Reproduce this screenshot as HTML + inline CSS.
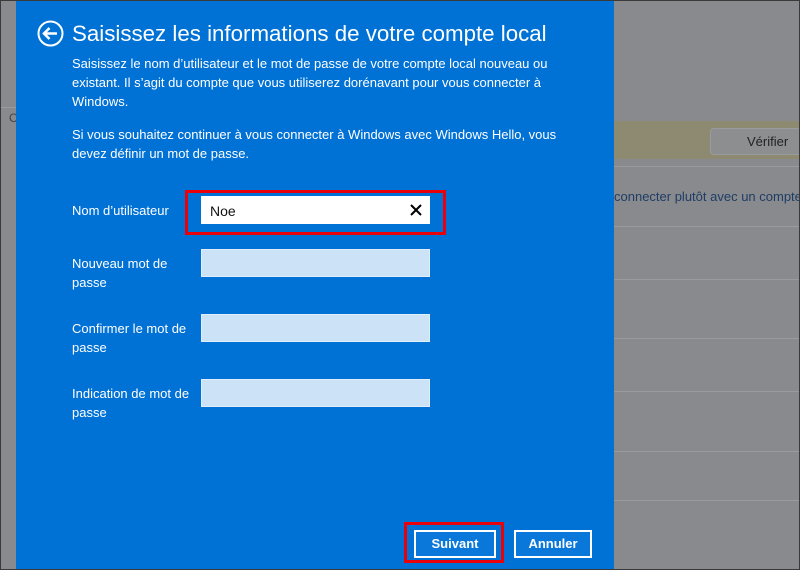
<!DOCTYPE html>
<html><head><meta charset="utf-8"><style>
*{margin:0;padding:0;box-sizing:border-box}
body{width:800px;height:570px;overflow:hidden;position:relative;background:#888a8d;font-family:"Liberation Sans",sans-serif;}
.frame{position:absolute;inset:0;border:1px solid #3a3a3a;z-index:20;pointer-events:none}
.abs{position:absolute}
.line{position:absolute;height:1px;background:#9a9b9d}
.blue{position:absolute;left:16px;top:0;width:598px;height:570px;background:#0071d5;color:#fff}
.t{position:absolute;color:#fff;font-size:13px;line-height:19px}
.in{position:absolute;left:185px;width:229px;height:28px;background:#cce2f6;border:1px solid #e0eefb}
.btn{position:absolute;top:530px;height:28px;border:2px solid #fff;color:#fff;font-weight:bold;font-size:13px;text-align:center;line-height:24px;background:#0a78da}
.red{position:absolute;border:3px solid #e8000b}
</style></head><body>
<div class="line" style="left:0;top:107px;width:16px"></div>
<div class="abs" style="left:9px;top:111px;font-size:12px;color:#444">C</div>
<div class="abs" style="left:614px;top:121px;width:186px;height:38px;background:#8e8a72"></div>
<div class="abs" style="left:710px;top:128px;width:92px;height:27px;background:#8d8e90;border:1px solid #9a9b9c;border-radius:4px;font-size:13px;color:#222;line-height:25px;padding-left:36px">Vérifier</div>
<div class="line" style="left:614px;top:166px;width:186px"></div>
<div class="abs" style="left:614px;top:189px;font-size:13px;color:#1f3d66;white-space:nowrap">connecter plutôt avec un compte l</div>
<div class="line" style="left:614px;top:226px;width:186px"></div>
<div class="line" style="left:614px;top:279px;width:186px"></div>
<div class="line" style="left:614px;top:338px;width:186px"></div>
<div class="line" style="left:614px;top:391px;width:186px"></div>
<div class="line" style="left:614px;top:451px;width:186px"></div>
<div class="line" style="left:614px;top:500px;width:186px"></div>
<div class="blue">
<svg class="abs" style="left:21px;top:20px" width="27" height="27" viewBox="0 0 27 27"><circle cx="13.5" cy="13.5" r="12" fill="none" stroke="#fff" stroke-width="2"/><path d="M7 13.5H20M12.5 8L7 13.5L12.5 19" fill="none" stroke="#fff" stroke-width="2.6"/></svg>
<div class="t" style="left:56px;top:19px;font-size:22.3px;line-height:30px;white-space:nowrap">Saisissez les informations de votre compte local</div>
<div class="t" style="left:56px;top:54px;width:500px">Saisissez le nom d’utilisateur et le mot de passe de votre compte local nouveau ou existant. Il s’agit du compte que vous utiliserez dorénavant pour vous connecter à Windows.</div>
<div class="t" style="left:56px;top:125px;width:500px">Si vous souhaitez continuer à vous connecter à Windows avec Windows Hello, vous devez définir un mot de passe.</div>
<div class="t" style="left:56px;top:201px">Nom d’utilisateur</div>
<div class="t" style="left:56px;top:254px;width:120px">Nouveau mot de passe</div>
<div class="t" style="left:56px;top:319px;width:125px">Confirmer le mot de passe</div>
<div class="t" style="left:56px;top:384px;width:125px">Indication de mot de passe</div>
<div class="red" style="left:169px;top:190px;width:261px;height:45px"></div>
<div class="abs" style="left:185px;top:196px;width:229px;height:28px;background:#fff;color:#111;font-size:14px;line-height:30px;padding-left:9px">Noe
<svg class="abs" style="right:8px;top:8px" width="12" height="12" viewBox="0 0 12 12"><path d="M1 1L11 11M11 1L1 11" stroke="#000" stroke-width="2"/></svg></div>
<div class="in" style="top:249px"></div>
<div class="in" style="top:314px"></div>
<div class="in" style="top:379px"></div>
<div class="red" style="left:388px;top:522px;width:100px;height:41px"></div>
<div class="btn" style="left:398px;width:82px">Suivant</div>
<div class="btn" style="left:498px;width:78px">Annuler</div>
</div>
<div class="frame"></div>
</body></html>
